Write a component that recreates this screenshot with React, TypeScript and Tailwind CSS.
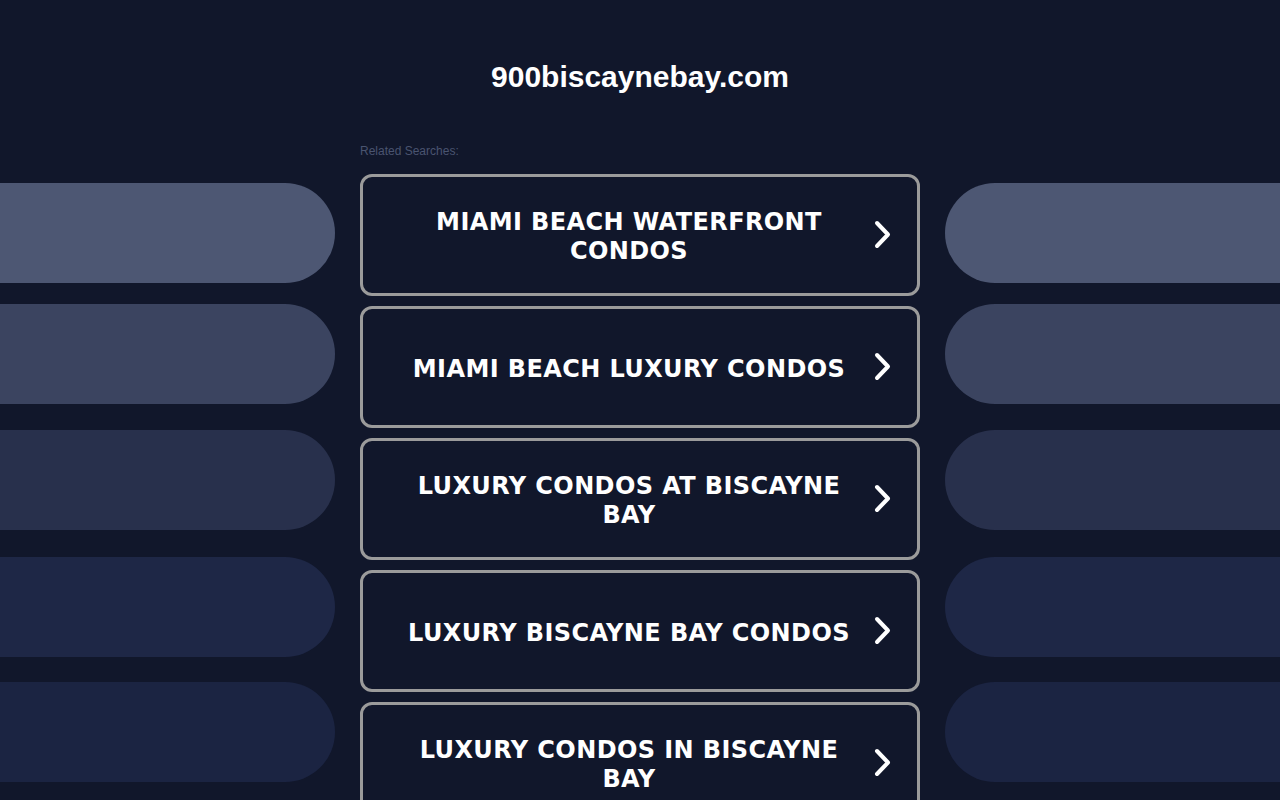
import React from 'react';

const searches = [
  'MIAMI BEACH WATERFRONT CONDOS',
  'MIAMI BEACH LUXURY CONDOS',
  'LUXURY CONDOS AT BISCAYNE BAY',
  'LUXURY BISCAYNE BAY CONDOS',
  'LUXURY CONDOS IN BISCAYNE BAY',
];

function SidePills({ side }: { side: 'left' | 'right' }) {
  const round = side === 'left' ? 'rounded-r-full' : 'rounded-l-full';
  return (
    <div className="flex flex-col w-[335px] shrink-0 pt-[43px]">
      <div className={`h-[100px] bg-[#4d5773] ${round}`} />
      <div className={`h-[100px] mt-[21px] bg-[#3b4460] ${round}`} />
      <div className={`h-[100px] mt-[26px] bg-[#28304c] ${round}`} />
      <div className={`h-[100px] mt-[27px] bg-[#1e2746] ${round}`} />
      <div className={`h-[100px] mt-[25px] bg-[#1b2442] ${round}`} />
    </div>
  );
}

function Chevron() {
  return (
    <svg width="20" height="30" viewBox="0 0 20 30" fill="none">
      <polyline
        points="4,3 15,14.5 4,26"
        stroke="#ffffff"
        strokeWidth="4"
        strokeLinecap="round"
        strokeLinejoin="round"
      />
    </svg>
  );
}

export default function App() {
  return (
    <div className="w-full h-[800px] overflow-hidden bg-[#11172b] font-['Liberation_Sans',Arial,sans-serif]">
      <header className="h-[140px] pt-[59px] text-center">
        <h1 className="text-[30px] leading-[36px] font-bold text-white">900biscaynebay.com</h1>
      </header>

      <div className="flex justify-between gap-[25px]">
        <SidePills side="left" />

        <div className="w-[560px] shrink-0">
          <p className="pt-[1px] text-[12px] leading-[20px] text-[#4a5470]">Related Searches:</p>
          <div className="mt-[13px] flex flex-col gap-[10px]">
            {searches.map(s => (
              <a
                key={s}
                href="#"
                className="h-[122px] flex items-center border-[3px] border-[#9b9b9b] rounded-[12px] bg-[#11172b]"
              >
                <span className="flex-1 pl-[32px] pt-[4px] text-center text-white text-[24px] leading-[29px] font-bold tracking-[0.4px] font-['DejaVu_Sans',Verdana,sans-serif]">
                  {s}
                </span>
                <span className="w-[40px] mr-[14px] flex justify-center">
                  <Chevron />
                </span>
              </a>
            ))}
          </div>
        </div>

        <SidePills side="right" />
      </div>
    </div>
  );
}
